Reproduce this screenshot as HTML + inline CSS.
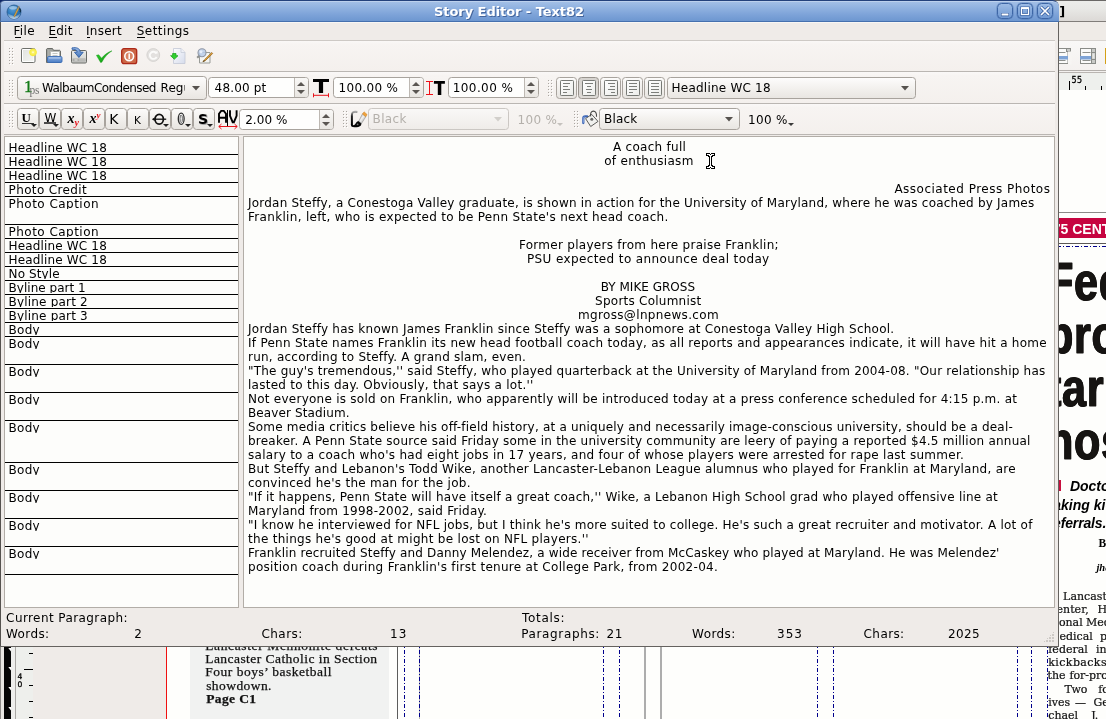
<!DOCTYPE html>
<html><head><meta charset="utf-8"><title>Story Editor - Text82</title>
<style>
*{box-sizing:border-box;margin:0;padding:0}
html,body{width:1106px;height:719px;overflow:hidden;background:#fff}
body{position:relative;font-family:"DejaVu Sans","Liberation Sans",sans-serif;font-size:12px;color:#000;line-height:14px}
.abs,.abs>*{position:absolute}
svg{display:block;overflow:visible}
#bg{will-change:transform;left:0;top:0;width:1106px;height:719px;overflow:hidden;background:#fefefc}
#win{will-change:transform;left:0;top:0;width:1059px;height:647px;overflow:hidden}
#winbg{left:0;top:20px;width:1059px;height:627px;background:#efebe8}
.t{position:absolute;white-space:nowrap;height:14px;line-height:14px}
#title{left:0;top:0;width:1059px;height:22px;background:linear-gradient(#a5c1e7 0,#93b4e1 30%,#7ca2d8 70%,#6d97d0 100%);border-top:1px solid #24427c;border-bottom:1px solid #4670ae;border-radius:4.500px 6.500px 0 0;overflow:hidden;box-shadow:inset 0 1px 0 rgba(255,255,255,.28),inset 1px 0 0 #4c6792}
#title .t{margin-top:0}
.wb{top:2px;width:16px;height:16px;border:1px solid #3d66a6;border-radius:4.500px;background:linear-gradient(#9cbbe5,#7099d3);box-shadow:0 0 0 .5px rgba(61,102,166,.5)}
.hl{height:1px;left:4px;width:1051px;background:#cdc9c5}
.hl.d{background:#bab6b2}
.tb{left:4px;width:1051px;background:linear-gradient(#faf8f7 0,#f7f4f2 12%,#f4f0ed 100%)}
.grip{width:1px;height:1px;background:#aaa6a1;box-shadow:0px 0px 0 #aaa6a1,1px 1px 0 #fff,3px 0px 0 #aaa6a1,4px 1px 0 #fff,0px 3px 0 #aaa6a1,1px 4px 0 #fff,3px 3px 0 #aaa6a1,4px 4px 0 #fff,0px 6px 0 #aaa6a1,1px 7px 0 #fff,3px 6px 0 #aaa6a1,4px 7px 0 #fff,0px 9px 0 #aaa6a1,1px 10px 0 #fff,3px 9px 0 #aaa6a1,4px 10px 0 #fff,0px 12px 0 #aaa6a1,1px 13px 0 #fff,3px 12px 0 #aaa6a1,4px 13px 0 #fff,0px 15px 0 #aaa6a1,1px 16px 0 #fff,3px 15px 0 #aaa6a1,4px 16px 0 #fff}
.combo,.spin,.btn{border:1px solid #a8a39d;border-radius:3.500px}
.combo{background:linear-gradient(#fdfcfc,#f3f1ee 50%,#e9e6e2)}
.combo.dis{border-color:#cbc7c3;background:linear-gradient(#f9f8f7,#efece9)}
.spin{background:#fefefd}
.spin i{right:0;top:0;bottom:0;width:14px;border-left:1px solid #bdb8b2;background:linear-gradient(#f9f8f6,#e9e6e2);border-radius:0 2.500px 2.500px 0}
.btn{background:linear-gradient(#fcfbfa,#f2f0ed 50%,#e8e5e1)}
.btn.on{background:linear-gradient(#d6d3cf,#dedbd7);border-color:#98938d}
.lab{height:14px;overflow:hidden}
.ln{left:0;width:233px;height:1px;background:#000}
.frame{border:1px solid #b2ada7;background:#fdfdfb}
.sgrip{width:12px;height:12px;background-image:radial-gradient(circle at 1px 1px,#cdc9c5 .8px,transparent 1.100px);background-size:3px 3px;-webkit-mask:linear-gradient(135deg,transparent 50%,#000 50%)}
.dv{width:1px;background:repeating-linear-gradient(to bottom,#00008c 0,#00008c 4px,transparent 4px,transparent 6px,#00008c 6px,#00008c 7px,transparent 7px,transparent 9px);background-position:0 1px}
.dh{height:1px;background:repeating-linear-gradient(to right,#00008c 0,#00008c 4px,transparent 4px,transparent 6px,#00008c 6px,#00008c 7px,transparent 7px,transparent 9px);background-position:-2px 0}
.hd{font:bold 54px/60px "Liberation Sans",sans-serif;height:60px;white-space:nowrap;color:#161412;transform-origin:0 0;transform:scaleX(.8);-webkit-text-stroke:1.100px #161412;text-shadow:.7px 0 0 #161412,-.7px 0 0 #161412;letter-spacing:.8px}
</style></head><body>
<div id="bg" class="abs">
<div class="abs" id="bgtop">
<div style="left:0;top:0;width:10px;height:10px;background:#0e2466"></div>
<div style="left:1050px;top:0;width:56px;height:22px;background:linear-gradient(#ecedea 0,#e8e8e5 40%,#dcd9d6 100%);border-top:1px solid #6a6866;border-bottom:1px solid #807c79"></div>
<span class="t" style="left:1059.30px;top:2.6px;height:17px;line-height:17px;font-family:'DejaVu Sans',sans-serif;font-size:13px;font-weight:bold;">]</span>
<div style="left:1050px;top:22px;width:56px;height:18px;background:#efebe7"></div>
<div style="left:1050px;top:40px;width:56px;height:1px;background:#d6d2ce"></div>
<div style="left:1050px;top:41px;width:56px;height:29px;background:linear-gradient(#f9f8f7,#f4f1ef)"></div>
<div style="left:1050px;top:70px;width:56px;height:1px;background:#b3afab"></div>
<div style="left:1050px;top:71px;width:56px;height:1px;background:#f3f1ef"></div>
<div style="left:1050px;top:72px;width:56px;height:1px;background:#b9b5b1"></div>
<div style="left:1050px;top:73px;width:56px;height:17px;background:#eef0ed"></div>
<div style="left:1069px;top:81px;width:1px;height:9px;background:#000"></div>
<div style="left:1085px;top:86px;width:1px;height:4px;background:#000"></div>
<div style="left:1101px;top:86px;width:1px;height:4px;background:#000"></div>
<span class="t" style="left:1071.60px;top:75.73px;letter-spacing:0.400px;height:10px;line-height:10px;-webkit-text-stroke:.3px #000;font-family:'DejaVu Sans',sans-serif;font-size:8px;">55</span>
<svg style="position:absolute;left:1055px;top:48px" width="16" height="16" viewBox="0 0 16 16" ><rect x=".5" y=".5" width="12.500" height="15" fill="#fbfbfa" stroke="#8a8c88"/><rect x="11.500" y=".5" width="4" height="3" fill="#c9cac7" stroke="#8a8c88"/><path d="M2.500 4.500h8M2.500 12.500h8" stroke="#8e908c"/><rect x="0" y="8" width="13" height="3.500" fill="#7ea3d6"/><rect x="13" y="3.500" width="3.500" height="13" fill="#f7f5f3"/></svg>
<svg style="position:absolute;left:1080px;top:48px" width="16" height="16" viewBox="0 0 16 16" ><rect x=".5" y=".5" width="12.500" height="15" fill="#fbfbfa" stroke="#8a8c88"/><rect x="11.500" y=".5" width="4" height="15" fill="#c9cac7" stroke="#8a8c88"/><path d="M11.500 4.500h4M11.500 11.500h4" stroke="#8a8c88"/><rect x="12.500" y="5.500" width="2" height="5" fill="#e6e6e4"/><path d="M2.500 4.500h8M2.500 12.500h8" stroke="#8e908c"/><rect x="0" y="8" width="11" height="3.500" fill="#7ea3d6"/></svg>
<div style="left:1105px;top:48px;width:1px;height:16px;background:#d4a017"></div>
</div>
<div class="abs" id="bgpage">
<div style="left:1059px;top:212px;width:47px;height:1px;background:#8b8987"></div>
<div style="left:1059px;top:218px;width:47px;height:20px;background:#c60440"></div>
<span class="t" style="left:1052.80px;top:219.65px;height:18px;line-height:18px;color:#fff;font-family:'Liberation Sans',sans-serif;font-size:14px;font-weight:bold;">75 CENTS</span>
<div style="left:1059px;top:243px;width:47px;height:1px;background:#5a5856"></div>
<div class="dh" style="left:1059px;top:246px;width:47px"></div>
<span class="hd" style="left:1047px;top:251.0px">Feds</span>
<span class="hd" style="left:1047px;top:304.0px">pro</span>
<span class="hd" style="left:1047px;top:357.0px">tar</span>
<span class="hd" style="left:1047px;top:410.0px">hos</span>
<div style="left:1059px;top:480px;width:2.300px;height:11px;background:#c8103f"></div>
<span class="t" style="left:1069.90px;top:476.65px;height:18px;line-height:18px;font-family:'Liberation Sans',sans-serif;font-size:14px;font-weight:bold;font-style:italic;">Doctors</span>
<span class="t" style="left:1048.60px;top:495.55px;height:18px;line-height:18px;font-family:'Liberation Sans',sans-serif;font-size:14px;font-weight:bold;font-style:italic;">taking kickbacks</span>
<span class="t" style="left:1047.80px;top:513.55px;letter-spacing:-0.156px;height:18px;line-height:18px;font-family:'Liberation Sans',sans-serif;font-size:14px;font-weight:bold;font-style:italic;">referrals.</span>
<span class="t" style="left:1098.50px;top:536.12px;height:15px;line-height:15px;font-family:'Liberation Serif',serif;font-size:11.5px;font-weight:bold;">BY</span>
<span class="t" style="left:1096.40px;top:561.46px;height:14px;line-height:14px;font-family:'Liberation Serif',serif;font-size:10.5px;font-weight:bold;font-style:italic;">jhawkes</span>
<span class="t" style="left:1063.10px;top:589.73px;height:14px;line-height:14px;color:#111;-webkit-text-stroke:.2px #111;font-family:'DejaVu Serif',serif;font-size:11px;">Lancaster</span>
<span class="t" style="left:1048.20px;top:603.0px;height:14px;line-height:14px;color:#111;-webkit-text-stroke:.2px #111;font-family:'DejaVu Serif',serif;font-size:11px;">Center,</span>
<span class="t" style="left:1097.60px;top:603.0px;height:14px;line-height:14px;color:#111;-webkit-text-stroke:.2px #111;font-family:'DejaVu Serif',serif;font-size:11px;">H</span>
<span class="t" style="left:1058.90px;top:616.27px;height:14px;line-height:14px;color:#111;-webkit-text-stroke:.2px #111;font-family:'DejaVu Serif',serif;font-size:11px;">onal</span>
<span class="t" style="left:1086.00px;top:616.27px;height:14px;line-height:14px;color:#111;-webkit-text-stroke:.2px #111;font-family:'DejaVu Serif',serif;font-size:11px;">Medical</span>
<span class="t" style="left:1048.20px;top:629.54px;height:14px;line-height:14px;color:#111;-webkit-text-stroke:.2px #111;font-family:'DejaVu Serif',serif;font-size:11px;">Medical</span>
<span class="t" style="left:1100.10px;top:629.54px;height:14px;line-height:14px;color:#111;-webkit-text-stroke:.2px #111;font-family:'DejaVu Serif',serif;font-size:11px;">p</span>
<span class="t" style="left:1048.30px;top:642.81px;height:14px;line-height:14px;color:#111;-webkit-text-stroke:.2px #111;font-family:'DejaVu Serif',serif;font-size:11px;">federal</span>
<span class="t" style="left:1096.10px;top:642.81px;height:14px;line-height:14px;color:#111;-webkit-text-stroke:.2px #111;font-family:'DejaVu Serif',serif;font-size:11px;">in</span>
<span class="t" style="left:1048.30px;top:656.08px;letter-spacing:0.400px;height:14px;line-height:14px;color:#111;-webkit-text-stroke:.2px #111;font-family:'DejaVu Serif',serif;font-size:11px;">kickbacks</span>
<span class="t" style="left:1047.50px;top:669.35px;height:14px;line-height:14px;color:#111;-webkit-text-stroke:.2px #111;font-family:'DejaVu Serif',serif;font-size:11px;">the</span>
<span class="t" style="left:1069.40px;top:669.35px;height:14px;line-height:14px;color:#111;-webkit-text-stroke:.2px #111;font-family:'DejaVu Serif',serif;font-size:11px;">for-profit</span>
<span class="t" style="left:1064.50px;top:682.62px;height:14px;line-height:14px;color:#111;-webkit-text-stroke:.2px #111;font-family:'DejaVu Serif',serif;font-size:11px;">Two</span>
<span class="t" style="left:1098.20px;top:682.62px;height:14px;line-height:14px;color:#111;-webkit-text-stroke:.2px #111;font-family:'DejaVu Serif',serif;font-size:11px;">fo</span>
<span class="t" style="left:1048.30px;top:695.89px;height:14px;line-height:14px;color:#111;-webkit-text-stroke:.2px #111;font-family:'DejaVu Serif',serif;font-size:11px;">ives</span>
<span class="t" style="left:1075.00px;top:695.89px;height:14px;line-height:14px;color:#111;-webkit-text-stroke:.2px #111;font-family:'DejaVu Serif',serif;font-size:11px;">—</span>
<span class="t" style="left:1093.40px;top:695.89px;height:14px;line-height:14px;color:#111;-webkit-text-stroke:.2px #111;font-family:'DejaVu Serif',serif;font-size:11px;">Ge</span>
<span class="t" style="left:1048.30px;top:709.16px;height:14px;line-height:14px;color:#111;-webkit-text-stroke:.2px #111;font-family:'DejaVu Serif',serif;font-size:11px;">chael</span>
<span class="t" style="left:1091.30px;top:709.16px;height:14px;line-height:14px;color:#111;-webkit-text-stroke:.2px #111;font-family:'DejaVu Serif',serif;font-size:11px;">J.</span>
</div>
<div class="abs" id="bgbot">
<div style="left:0;top:640px;width:4px;height:80px;background:#e9e7e3"></div><div style="left:0;top:640px;width:1px;height:80px;background:#8d8b88"></div>
<div style="left:4px;top:640px;width:7px;height:80px;background:#050505"></div>
<svg style="position:absolute;left:8px;top:648px" width="3" height="4" viewBox="0 0 3 4" ><path d="M.3 0h2.700v3.600z" fill="#fff"/></svg>
<svg style="position:absolute;left:8px;top:667px" width="3" height="4" viewBox="0 0 3 4" ><path d="M.3 0h2.700v3.600z" fill="#fff"/></svg>
<svg style="position:absolute;left:8px;top:687px" width="3" height="4" viewBox="0 0 3 4" ><path d="M.3 0h2.700v3.600z" fill="#fff"/></svg>
<svg style="position:absolute;left:8px;top:707px" width="3" height="4" viewBox="0 0 3 4" ><path d="M.3 0h2.700v3.600z" fill="#fff"/></svg>
<div style="left:11px;top:640px;width:4px;height:80px;background:#eeeeec"></div><div style="left:15px;top:640px;width:1px;height:80px;background:#a9a7a4"></div>
<div style="left:16px;top:640px;width:17px;height:80px;background:#eeefec"></div>
<div style="left:33px;top:640px;width:133px;height:80px;background:#efebe8"></div>
<div style="left:29px;top:653px;width:4px;height:1px;background:#000"></div>
<div style="left:29px;top:685px;width:4px;height:1px;background:#000"></div>
<div style="left:29px;top:701px;width:4px;height:1px;background:#000"></div>
<div style="left:29px;top:717px;width:4px;height:1px;background:#000"></div>
<div style="left:24px;top:669px;width:9px;height:1px;background:#000"></div>
<span class="t" style="left:17.40px;top:672.37px;height:10px;line-height:10px;-webkit-text-stroke:.3px #000;font-family:'DejaVu Sans',sans-serif;font-size:7.6px;">4</span>
<span class="t" style="left:17.40px;top:680.37px;height:10px;line-height:10px;-webkit-text-stroke:.3px #000;font-family:'DejaVu Sans',sans-serif;font-size:7.6px;">0</span>
<div style="left:166px;top:640px;width:1px;height:80px;background:#f01010"></div>
<div style="left:190px;top:640px;width:199px;height:80px;background:#f1f2f1"></div>
<span class="t" style="left:205.20px;top:637.44px;letter-spacing:0.631px;height:18px;line-height:18px;color:#111;-webkit-text-stroke:.25px #111;font-family:'Liberation Serif',serif;font-size:13.5px;">Lancaster Mennonite defeats</span>
<span class="t" style="left:205.20px;top:650.44px;letter-spacing:0.450px;height:18px;line-height:18px;color:#111;-webkit-text-stroke:.25px #111;font-family:'Liberation Serif',serif;font-size:13.5px;">Lancaster Catholic in Section</span>
<span class="t" style="left:205.20px;top:663.44px;letter-spacing:0.520px;height:18px;line-height:18px;color:#111;-webkit-text-stroke:.25px #111;font-family:'Liberation Serif',serif;font-size:13.5px;">Four boys’ basketball</span>
<span class="t" style="left:206.20px;top:676.74px;letter-spacing:0.425px;height:18px;line-height:18px;color:#111;-webkit-text-stroke:.25px #111;font-family:'Liberation Serif',serif;font-size:13.5px;">showdown.</span>
<span class="t" style="left:206.20px;top:689.84px;letter-spacing:0.367px;height:18px;line-height:18px;color:#111;-webkit-text-stroke:.25px #111;font-family:'Liberation Serif',serif;font-size:13.5px;font-weight:bold;">Page C1</span>
<div style="left:397px;top:640px;width:1px;height:80px;background:#5c5c5c"></div>
<div class="dv" style="left:404px;top:640px;height:80px"></div>
<div class="dv" style="left:419px;top:640px;height:80px"></div>
<div class="dv" style="left:603px;top:640px;height:80px"></div>
<div class="dv" style="left:619px;top:640px;height:80px"></div>
<div class="dv" style="left:817px;top:640px;height:80px"></div>
<div class="dv" style="left:833px;top:640px;height:80px"></div>
<div class="dv" style="left:1017px;top:640px;height:80px"></div>
<div class="dv" style="left:1031px;top:640px;height:80px"></div>
<div class="dv" style="left:1047px;top:640px;height:80px"></div>
<div style="left:419px;top:640px;width:1px;height:80px;background:#b5b5b5;z-index:-1"></div>
<div style="left:644px;top:640px;width:2px;height:80px;background:#adadad"></div><div style="left:660px;top:640px;width:2px;height:80px;background:#adadad"></div>
</div>
</div>
<div id="win" class="abs"><div id="winbg"></div>
<div id="title" class="abs">
<svg style="position:absolute;left:6px;top:3px" width="16" height="16" viewBox="0 0 16 16" ><defs><radialGradient id="gg" cx=".4" cy=".3" r=".8"><stop offset="0" stop-color="#5aa0d8"/><stop offset=".5" stop-color="#2a78bc"/><stop offset="1" stop-color="#1d5c9a"/></radialGradient><linearGradient id="gg2" x1="0" y1="0" x2="0" y2="1"><stop offset="0" stop-color="#fff" stop-opacity="0"/><stop offset="1" stop-color="#d8e8f6" stop-opacity=".85"/></linearGradient></defs>
<circle cx="8" cy="8" r="7" fill="url(#gg)" stroke="#2c5a8c" stroke-width=".8"/><path d="M1.500 9c2.500 1.500 5 3 7.500 3.200 2-.2 4-1.800 5.500-3.500-.5 3.800-3 6-6.500 6.200C4.500 14.800 2 12.500 1.500 9z" fill="url(#gg2)"/><ellipse cx="7" cy="3.800" rx="4" ry="1.800" fill="#cfe4f6" opacity=".55"/>
<path d="M12.500 2.200l1.200.8-4.500 9.200-1.200.9.100-1.600z" fill="#e6a83e" stroke="#8a6a2a" stroke-width=".4"/><path d="M12.500 2.200l1.200.8-.9 1.800-1.200-.7z" fill="#8a8480"/><path d="M13.500 4.500c1 .8 1.300 2.300.8 3.800" stroke="#12324e" stroke-width="1.400" fill="none"/></svg>
<span class="t" style="left:434.00px;top:4px;letter-spacing:-0.060px;color:#fff;text-shadow:1px 1px 0 #44659c;font-weight:bold;font-size:13px;">Story Editor - Text82</span>
<div class="wb" style="left:997px"><svg style="position:absolute;left:0px;top:0px" width="14" height="14" viewBox="0 0 14 14" ><path d="M3 10.600h8" stroke="#3c63a2" stroke-width="3.400"/><path d="M3.600 10.600h6.800" stroke="#fff" stroke-width="2"/></svg></div>
<div class="wb" style="left:1017px"><svg style="position:absolute;left:0px;top:0px" width="14" height="14" viewBox="0 0 14 14" ><rect x="3.500" y="3.800" width="7" height="6.700" fill="none" stroke="#3c63a2" stroke-width="2.600"/><rect x="3.500" y="3.800" width="7" height="6.700" fill="none" stroke="#fff" stroke-width="1.200"/><path d="M3.500 4.200h7" stroke="#fff" stroke-width="1.800"/></svg></div>
<div class="wb" style="left:1037px"><svg style="position:absolute;left:0px;top:0px" width="14" height="14" viewBox="0 0 14 14" ><path d="M2.800 2.800l8.400 8.400M11.200 2.800l-8.400 8.400" stroke="#3c63a2" stroke-width="3.200"/><path d="M3 3l8 8M11 3l-8 8" stroke="#fff" stroke-width="1.700"/></svg></div>
</div>
<div id="menu" class="abs">
<span class="t" style="left:13.50px;top:24px;letter-spacing:0.333px;">File</span>
<span class="t" style="left:48.40px;top:24px;letter-spacing:0.267px;">Edit</span>
<span class="t" style="left:86.10px;top:24px;letter-spacing:0.240px;">Insert</span>
<span class="t" style="left:136.80px;top:24px;letter-spacing:0.429px;">Settings</span>
<div style="left:14.5px;top:37px;width:6.3px;height:1px;background:#000"></div>
<div style="left:49.2px;top:37px;width:7.6px;height:1px;background:#000"></div>
<div style="left:87.3px;top:37px;width:3px;height:1px;background:#000"></div>
<div style="left:137.4px;top:37px;width:7.4px;height:1px;background:#000"></div>
</div>
<div class="abs">
<div class="hl" style="top:40px"></div><div class="tb" style="top:41px;height:30px"></div>
<div class="hl d" style="top:71px"></div><div class="tb" style="top:72px;height:31px"></div>
<div class="hl d" style="top:103px"></div><div class="tb" style="top:104px;height:30px"></div>
<div class="hl d" style="top:134px"></div>
<div class="grip" style="left:9px;top:48px"></div>
<div class="grip" style="left:9px;top:80px"></div>
<div class="grip" style="left:548px;top:80px"></div>
<div class="grip" style="left:9px;top:111px"></div>
<div class="grip" style="left:343px;top:111px"></div>
<div class="grip" style="left:574px;top:111px"></div>
</div>
<div class="abs" id="tb1"><svg style="position:absolute;left:21px;top:48px" width="16" height="16" viewBox="0 0 16 16" ><defs><linearGradient id="gn" x1="0" y1="0" x2="1" y2="1"><stop offset="0" stop-color="#e2e4e0"/><stop offset="1" stop-color="#f4f5f2"/></linearGradient><radialGradient id="gy"><stop offset="0" stop-color="#fffef0"/><stop offset=".3" stop-color="#fbf36a"/><stop offset=".75" stop-color="#f6ea3e"/><stop offset="1" stop-color="#f6ea3e" stop-opacity="0"/></radialGradient></defs>
<rect x=".5" y=".5" width="13.500" height="14" rx="1.3" fill="#fff" stroke="#6e706c"/><rect x="2" y="2" width="10.500" height="11" fill="url(#gn)"/><circle cx="12" cy="4.3" r="4.4" fill="url(#gy)"/></svg><svg style="position:absolute;left:46px;top:48px" width="17" height="16" viewBox="0 0 17 16" ><defs><linearGradient id="go" x1="0" y1="0" x2="0" y2="1"><stop offset="0" stop-color="#8db0e2"/><stop offset="1" stop-color="#4a7cc4"/></linearGradient></defs>
<path d="M.5 14.5V1.2l.7-.7h5.3l1 1.8h6.2l.8.8v11.400z" fill="#a0a29e" stroke="#6a6c68"/><path d="M2 3h1.5M2 5h1.5M2 7h1.5" stroke="#b8bab6"/>
<path d="M4.5 3.5h9v8h-9z" fill="#fbfbfa" stroke="#b9bbb7"/><path d="M6.5 5.5h5M6.500 7.500h5" stroke="#c5c7c3"/>
<rect x="1.500" y="8.500" width="14.500" height="6" rx="1.200" fill="url(#go)" stroke="#3a6cb6" stroke-width=".9"/><path d="M3 10h11.500" stroke="#c2d6f3" opacity=".85"/></svg><svg style="position:absolute;left:71px;top:47px" width="17" height="17" viewBox="0 0 17 17" ><defs><linearGradient id="gs" x1="0" y1="0" x2="0" y2="1"><stop offset="0" stop-color="#ecedea"/><stop offset="1" stop-color="#cccdca"/></linearGradient><linearGradient id="gsa" x1="0" y1="0" x2="0" y2="1"><stop offset="0" stop-color="#9dbbe4"/><stop offset="1" stop-color="#3f72bb"/></linearGradient></defs>
<rect x=".5" y="3.500" width="15" height="12.500" rx="1.200" fill="url(#gs)" stroke="#666864"/><rect x="1.500" y="11.5" width="13" height="3" fill="#a9aaa7"/><path d="M3.500 13h3M8.500 13h1M10.500 13h1M12.500 13h1" stroke="#e8e8e6"/>
<path d="M1 .9c4.500-.8 8 .3 8.300 4.300h2.900L7.900 10.500 3.500 5.200h2.700C6 2.900 4 2 1 2.300z" fill="url(#gsa)" stroke="#2c5ca6" stroke-width=".9"/></svg><svg style="position:absolute;left:96px;top:49px" width="17" height="16" viewBox="0 0 17 16" ><defs><linearGradient id="gc" x1="0" y1="0" x2="1" y2="1"><stop offset="0" stop-color="#35d835"/><stop offset="1" stop-color="#0a8a0a"/></linearGradient></defs>
<path d="M.4 6.300l2.300-.5 2.900 3.400C8.300 6 11.600 3.200 16 1.800c-4.300 2.900-7.400 6.200-10.200 11.400L4.600 13.500z" fill="url(#gc)" stroke="#0b8f0b" stroke-width=".4"/></svg><svg style="position:absolute;left:121px;top:48px" width="17" height="17" viewBox="0 0 17 17" ><rect x=".7" y=".7" width="15" height="15" rx="2.200" fill="#cc6746" stroke="#ad2818" stroke-width="1.300"/><circle cx="8.200" cy="8.200" r="4.400" fill="#d98464" stroke="#fff" stroke-width="1.600"/><path d="M8.200 5.400v5.600" stroke="#fff" stroke-width="1.500"/></svg><svg style="position:absolute;left:146px;top:48px" width="15" height="15" viewBox="0 0 15 15" ><circle cx="7.300" cy="7" r="6.400" fill="#e3e1df" stroke="#d6d4d1" stroke-width="1"/><path d="M10.300 5.200A3.600 3.600 0 1 0 10.600 9" fill="none" stroke="#fbfbfa" stroke-width="1.800"/><path d="M8.400 5.800l3.300-.3-.3-3z" fill="#fbfbfa"/></svg><svg style="position:absolute;left:170px;top:48px" width="17" height="17" viewBox="0 0 17 17" ><defs><linearGradient id="gi" x1="0" y1="0" x2="1" y2="1"><stop offset="0" stop-color="#fdfdfe"/><stop offset="1" stop-color="#d6dcec"/></linearGradient></defs>
<path d="M3.500.5h7.500l4 4v11h-11.500z" fill="url(#gi)" stroke="#c3c8d6" stroke-width=".8"/><path d="M11 .5v4h4" fill="#eef0f6" stroke="#c3c8d6" stroke-width=".7"/>
<path d="M2.600 5.500h3.400v2.200h2L4.300 11.300.6 7.700h2z" fill="#2fd02f" stroke="#12a012" stroke-width=".7"/></svg><svg style="position:absolute;left:196px;top:48px" width="17" height="16" viewBox="0 0 17 16" ><path d="M3.500 4.500h10.500v10.500H3.500z" fill="#f4f5f3" stroke="#9a9c98"/><path d="M1.200 9.800l3-3" stroke="#8e908c" stroke-width="2"/>
<circle cx="6" cy="4.800" r="4" fill="#b9cdea" fill-opacity=".85" stroke="#8e96a4" stroke-width="1.100"/><circle cx="5" cy="3.800" r="1.500" fill="#e6eefb"/>
<path d="M15.800 4.500l-7.300 7.200-1.600 2 2.400-1 7.400-7.200z" fill="#e9a63c" stroke="#8a5a12" stroke-width=".7"/><path d="M6.900 13.700l1.100-1.500.9.700z" fill="#222"/></svg></div>
<div class="abs" id="tb2">
<div class="combo" style="left:17px;top:76px;width:190px;height:24px"></div>
<span style="position:absolute;left:24px;top:78px;font:17px/18px 'Liberation Serif',serif;color:#127a16;-webkit-text-stroke:.35px #127a16;height:18px">1</span><span style="position:absolute;left:29.5px;top:83px;font:11.5px/14px 'Liberation Serif',serif;color:#747474;height:14px;letter-spacing:-.2px">ps</span>
<span class="t" style="left:42.00px;top:81px;letter-spacing:-0.587px;">WalbaumCondensed</span>
<span class="t" style="left:160.60px;top:81px;width:24.7px;overflow:hidden;">Regular</span>
<svg style="position:absolute;left:192px;top:86px" width="8" height="5" viewBox="0 0 8 5" ><path d="M0 0h8l-4.0 4.5z" fill="#56524e"/></svg>
<div class="spin abs" style="left:208px;top:77px;width:101px;height:21px"><i></i><svg style="position:absolute;left:88px;top:4px" width="8" height="4" viewBox="0 0 8 4" ><path d="M0 4h8L4 0z" fill="#5a5652"/></svg><svg style="position:absolute;left:88px;top:12px" width="8" height="4" viewBox="0 0 8 4" ><path d="M0 0h8L4 4z" fill="#5a5652"/></svg></div>
<span class="t" style="left:214.60px;top:81px;letter-spacing:0.171px;">48.00 pt</span>
<svg style="position:absolute;left:313px;top:79px" width="17" height="19" viewBox="0 0 17 19" ><path d="M0 0h16v2.900H10.100V14.100H5.900V2.900H0z" fill="#000"/><path d="M.5 14.300v4M15.500 14.300v4M.5 16.300h15" stroke="#e8141c" stroke-width="1" fill="none"/></svg>
<div class="spin abs" style="left:333px;top:77px;width:91px;height:21px"><i></i><svg style="position:absolute;left:78px;top:4px" width="8" height="4" viewBox="0 0 8 4" ><path d="M0 4h8L4 0z" fill="#5a5652"/></svg><svg style="position:absolute;left:78px;top:12px" width="8" height="4" viewBox="0 0 8 4" ><path d="M0 0h8L4 4z" fill="#5a5652"/></svg></div>
<span class="t" style="left:338.50px;top:81px;letter-spacing:0.314px;">100.00 %</span>
<svg style="position:absolute;left:426px;top:80px" width="19" height="16" viewBox="0 0 19 16" ><path d="M0 1.500h7M0 14.500h7M3.500 1.500v13" stroke="#f01018" stroke-width="1" fill="none"/><path d="M7.900 1h11v2.700H15.300V15H11.800V3.700H7.900z" fill="#000"/></svg>
<div class="spin abs" style="left:448px;top:77px;width:91px;height:21px"><i></i><svg style="position:absolute;left:78px;top:4px" width="8" height="4" viewBox="0 0 8 4" ><path d="M0 4h8L4 0z" fill="#5a5652"/></svg><svg style="position:absolute;left:78px;top:12px" width="8" height="4" viewBox="0 0 8 4" ><path d="M0 0h8L4 4z" fill="#5a5652"/></svg></div>
<span class="t" style="left:452.80px;top:81px;letter-spacing:0.400px;">100.00 %</span>
<div class="btn" style="left:556px;top:77px;width:21px;height:22px"></div><svg style="position:absolute;left:560px;top:80px" width="14" height="16" viewBox="0 0 14 16" ><defs><linearGradient id="gal" x1="0" y1="0" x2="1" y2="1"><stop offset="0" stop-color="#fff"/><stop offset="1" stop-color="#ecedea"/></linearGradient></defs><rect x=".5" y=".5" width="13" height="15" rx=".8" fill="url(#gal)" stroke="#777975"/><path d="M3 3.5H10M3 6.5H8M3 9.5H10M3 12.5H7" stroke="#7c7e7a"/></svg>
<div class="btn on" style="left:578px;top:77px;width:21px;height:22px"></div><svg style="position:absolute;left:582px;top:80px" width="14" height="16" viewBox="0 0 14 16" ><defs><linearGradient id="gac" x1="0" y1="0" x2="1" y2="1"><stop offset="0" stop-color="#fff"/><stop offset="1" stop-color="#ecedea"/></linearGradient></defs><rect x=".5" y=".5" width="13" height="15" rx=".8" fill="url(#gac)" stroke="#777975"/><path d="M3 3.5H11M5 6.5H9M4 9.5H10M5 12.5H9" stroke="#7c7e7a"/></svg>
<div class="btn" style="left:600px;top:77px;width:21px;height:22px"></div><svg style="position:absolute;left:604px;top:80px" width="14" height="16" viewBox="0 0 14 16" ><defs><linearGradient id="gar" x1="0" y1="0" x2="1" y2="1"><stop offset="0" stop-color="#fff"/><stop offset="1" stop-color="#ecedea"/></linearGradient></defs><rect x=".5" y=".5" width="13" height="15" rx=".8" fill="url(#gar)" stroke="#777975"/><path d="M4 3.5H11M6 6.5H11M4 9.5H11M7 12.5H11" stroke="#7c7e7a"/></svg>
<div class="btn" style="left:622px;top:77px;width:21px;height:22px"></div><svg style="position:absolute;left:626px;top:80px" width="14" height="16" viewBox="0 0 14 16" ><defs><linearGradient id="gaj" x1="0" y1="0" x2="1" y2="1"><stop offset="0" stop-color="#fff"/><stop offset="1" stop-color="#ecedea"/></linearGradient></defs><rect x=".5" y=".5" width="13" height="15" rx=".8" fill="url(#gaj)" stroke="#777975"/><path d="M3 3.5H11M3 6.5H11M3 9.5H11M3 12.5H7" stroke="#7c7e7a"/></svg>
<div class="btn" style="left:644px;top:77px;width:21px;height:22px"></div><svg style="position:absolute;left:648px;top:80px" width="14" height="16" viewBox="0 0 14 16" ><defs><linearGradient id="gaf" x1="0" y1="0" x2="1" y2="1"><stop offset="0" stop-color="#fff"/><stop offset="1" stop-color="#ecedea"/></linearGradient></defs><rect x=".5" y=".5" width="13" height="15" rx=".8" fill="url(#gaf)" stroke="#777975"/><path d="M3 3.5H11M3 6.5H11M3 9.5H11M3 12.5H11" stroke="#7c7e7a"/></svg>
<div class="combo" style="left:667px;top:77px;width:249px;height:22px"></div>
<span class="t" style="left:671.60px;top:81px;letter-spacing:0.215px;">Headline WC 18</span>
<svg style="position:absolute;left:901px;top:86px" width="8" height="5" viewBox="0 0 8 5" ><path d="M0 0h8l-4.0 4.5z" fill="#56524e"/></svg>
</div>
<div class="abs" id="tb3">
<div class="btn" style="left:17px;top:108px;width:22px;height:22px"></div><span style="position:absolute;left:21.5px;top:110px;font:bold 13px/16px 'Liberation Serif',serif;height:16px">U</span><svg style="position:absolute;left:22px;top:123px" width="13" height="2" viewBox="0 0 13 2" ><path d="M0 .5h12" stroke="#333"/></svg><svg style="position:absolute;left:31px;top:124px" width="6" height="3" viewBox="0 0 6 3" ><path d="M0 0h6l-3 3z" fill="#222"/></svg>
<div class="btn" style="left:39px;top:108px;width:22px;height:22px"></div><span style="position:absolute;left:44.5px;top:110px;font:12px/16px 'DejaVu Sans',sans-serif;height:16px">W</span><svg style="position:absolute;left:44px;top:122px" width="13" height="2" viewBox="0 0 13 2" ><path d="M0 1h12" stroke="#222" stroke-width="1.600"/></svg><svg style="position:absolute;left:53px;top:124px" width="6" height="3" viewBox="0 0 6 3" ><path d="M0 0h6l-3 3z" fill="#222"/></svg>
<div class="btn" style="left:61px;top:108px;width:22px;height:22px"></div><span style="position:absolute;left:67.5px;top:111px;font:italic bold 14px/16px 'Liberation Serif',serif;height:16px">x</span><span style="position:absolute;left:74.5px;top:117px;font:italic bold 10px/12px 'Liberation Serif',serif;height:12px;color:#e8141c">y</span>
<div class="btn" style="left:83px;top:108px;width:22px;height:22px"></div><span style="position:absolute;left:89.5px;top:111px;font:italic bold 14px/16px 'Liberation Serif',serif;height:16px">x</span><span style="position:absolute;left:96.5px;top:109px;font:italic bold 9px/12px 'Liberation Serif',serif;height:12px;color:#e8141c">y</span>
<div class="btn" style="left:105px;top:108px;width:22px;height:22px"></div><span style="position:absolute;left:109.3px;top:111px;font:14px/16px 'DejaVu Sans',sans-serif;height:16px">K</span>
<div class="btn" style="left:127px;top:108px;width:22px;height:22px"></div><span style="position:absolute;left:134px;top:112px;font:10.500px/16px 'DejaVu Sans',sans-serif;height:16px">K</span>
<div class="btn" style="left:149px;top:108px;width:22px;height:22px"></div><svg style="position:absolute;left:152px;top:112px" width="18" height="14" viewBox="0 0 18 14" ><ellipse cx="7.200" cy="7.200" rx="4.200" ry="4.900" fill="none" stroke="#111" stroke-width="1.800"/><path d="M.8 7.200h13.400" stroke="#111" stroke-width="1.300"/><path d="M0 7.200l2.500-1.800v3.600z" fill="#111"/></svg><svg style="position:absolute;left:163px;top:124px" width="6" height="3" viewBox="0 0 6 3" ><path d="M0 0h6l-3 3z" fill="#222"/></svg>
<div class="btn" style="left:171px;top:108px;width:22px;height:22px"></div><svg style="position:absolute;left:177px;top:112px" width="10" height="14" viewBox="0 0 10 14" ><ellipse cx="4.200" cy="6.800" rx="2.900" ry="5.600" fill="#fff" stroke="#2e2e2e" stroke-width="1.300"/><ellipse cx="4.200" cy="6.800" rx="1.200" ry="3.900" fill="#fafafa" stroke="#555" stroke-width=".9"/></svg><svg style="position:absolute;left:185px;top:124px" width="6" height="3" viewBox="0 0 6 3" ><path d="M0 0h6l-3 3z" fill="#222"/></svg>
<div class="btn" style="left:193px;top:108px;width:22px;height:22px"></div><span style="position:absolute;left:199px;top:111.5px;font:bold 14px/16px 'DejaVu Sans',sans-serif;height:16px;color:#a8a8a8">S</span><span style="position:absolute;left:198px;top:110.5px;font:bold 14px/16px 'DejaVu Sans',sans-serif;height:16px">S</span><svg style="position:absolute;left:207px;top:124px" width="6" height="3" viewBox="0 0 6 3" ><path d="M0 0h6l-3 3z" fill="#222"/></svg>
<svg style="position:absolute;left:218px;top:110px" width="20" height="19" viewBox="0 0 20 19" ><path d="M1 12.700V3.800L3.200 .9h2.600L8 3.800v8.900M1 7.800h7" fill="none" stroke="#000" stroke-width="1.900"/><path d="M9.500 0v16" stroke="#000" stroke-width="1"/><path d="M12 .2v5.600l2.700 6.400h1.200l2.700-6.400V.2" fill="none" stroke="#000" stroke-width="1.900"/><path d="M.8 16.500h18.400M3.500 14L.8 16.500 3.500 19M16.500 14l2.700 2.500L16.500 19" fill="none" stroke="#e8141c" stroke-width="1"/></svg>
<div class="spin abs" style="left:239px;top:109px;width:95px;height:21px"><i></i><svg style="position:absolute;left:82px;top:4px" width="8" height="4" viewBox="0 0 8 4" ><path d="M0 4h8L4 0z" fill="#5a5652"/></svg><svg style="position:absolute;left:82px;top:12px" width="8" height="4" viewBox="0 0 8 4" ><path d="M0 0h8L4 4z" fill="#5a5652"/></svg></div>
<span class="t" style="left:245.20px;top:113px;letter-spacing:0.040px;">2.00 %</span>
<svg style="position:absolute;left:350px;top:110px" width="18" height="18" viewBox="0 0 18 18" ><defs><linearGradient id="gbs" x1="0" y1="0" x2="0" y2="1"><stop offset="0" stop-color="#aaa"/><stop offset=".35" stop-color="#222"/><stop offset="1" stop-color="#000"/></linearGradient><linearGradient id="gbf" x1="0" y1="0" x2="1" y2="1"><stop offset="0" stop-color="#8a8a8a"/><stop offset=".45" stop-color="#f2f2f2"/><stop offset="1" stop-color="#8a8a8a"/></linearGradient></defs>
<path d="M7.400 1.900C3 1.300 1.900 2.400 1.900 5.200V15" fill="none" stroke="url(#gbs)" stroke-width="2"/>
<path d="M.9 14.500c0 2.300 1.200 2.700 3.500 2.700 3 0 5.400-.4 6.500-1.800 1-1.500.6-3.400-1-4.300-1.800-.6-3.400.4-4.200 2.200-.5 1.300-1.300 2-2.800 1.800z" fill="#050505"/><circle cx="7.600" cy="14.300" r=".9" fill="#777"/>
<path d="M8.700 11.300l2.700 2.300 4.400-6.800-3.400-2.900z" fill="url(#gbf)" stroke="#666" stroke-width=".4"/>
<path d="M12.400 3.900l3.400 2.900 1.300-2.300-3-2.700z" fill="#f0a23c" stroke="#c27a1c" stroke-width=".4"/></svg>
<div class="combo dis" style="left:368px;top:108px;width:141px;height:22px"></div>
<span class="t" style="left:372.60px;top:112px;letter-spacing:0.350px;color:#b4b0ab;">Black</span>
<svg style="position:absolute;left:494px;top:117px" width="8" height="5" viewBox="0 0 8 5" ><path d="M0 0h8l-4.0 4.5z" fill="#d2cfcb"/></svg>
<span class="t" style="left:517.60px;top:113px;letter-spacing:0.300px;color:#b4b0ab;">100 %</span>
<svg style="position:absolute;left:557px;top:123px" width="6" height="3" viewBox="0 0 6 3" ><path d="M0 0h6l-3 3z" fill="#c5c2be"/></svg>
<svg style="position:absolute;left:581px;top:110px" width="18" height="18" viewBox="0 0 18 18" ><path d="M2.300 13V8.300c0-1.300.8-1.900 2.100-1.900h1.800" fill="none" stroke="#3d66b6" stroke-width="2.300" stroke-linecap="round"/><path d="M2.300 12.800V8.400c0-.9.600-1.300 1.500-1.300" fill="none" stroke="#9cb8ea" stroke-width=".8"/>
<path d="M4.600 8.600l6.100-4.200 6.300 7-7.300 5.100z" fill="#f1f1ef" stroke="#4c4c4a" stroke-width=".9"/><path d="M9.700 6.300C9 3.200 10.400 1.100 12.400 1.100s3.400 1.700 3.100 5.700" fill="none" stroke="#484846" stroke-width="1.100"/><circle cx="10.800" cy="9.300" r="1.500" fill="#6a6a68"/></svg>
<div class="combo" style="left:599px;top:108px;width:141px;height:22px"></div>
<span class="t" style="left:604.00px;top:112px;letter-spacing:0.200px;">Black</span>
<svg style="position:absolute;left:725px;top:117px" width="8" height="5" viewBox="0 0 8 5" ><path d="M0 0h8l-4.0 4.5z" fill="#56524e"/></svg>
<span class="t" style="left:748.10px;top:113px;letter-spacing:0.300px;">100 %</span>
<svg style="position:absolute;left:788px;top:123px" width="6" height="3" viewBox="0 0 6 3" ><path d="M0 0h6l-3 3z" fill="#3a3a3a"/></svg>
</div>
<div class="abs" id="left"><div class="frame abs" style="left:4px;top:136px;width:235px;height:472px;overflow:hidden">
<div class="lab" style="left:-5px;top:2px;width:239px"><span class="t" style="left:8.60px;top:2px;letter-spacing:0.154px;">Headline WC 18</span></div><div class="ln" style="top:17px"></div>
<div class="lab" style="left:-5px;top:16px;width:239px"><span class="t" style="left:8.60px;top:2px;letter-spacing:0.154px;">Headline WC 18</span></div><div class="ln" style="top:31px"></div>
<div class="lab" style="left:-5px;top:30px;width:239px"><span class="t" style="left:8.60px;top:2px;letter-spacing:0.154px;">Headline WC 18</span></div><div class="ln" style="top:45px"></div>
<div class="lab" style="left:-5px;top:44px;width:239px"><span class="t" style="left:8.60px;top:2px;letter-spacing:0.364px;">Photo Credit</span></div><div class="ln" style="top:59px"></div>
<div class="lab" style="left:-5px;top:58px;width:239px"><span class="t" style="left:8.60px;top:2px;letter-spacing:0.467px;">Photo Caption</span></div><div class="ln" style="top:87px"></div>
<div class="lab" style="left:-5px;top:86px;width:239px"><span class="t" style="left:8.60px;top:2px;letter-spacing:0.467px;">Photo Caption</span></div><div class="ln" style="top:101px"></div>
<div class="lab" style="left:-5px;top:100px;width:239px"><span class="t" style="left:8.60px;top:2px;letter-spacing:0.154px;">Headline WC 18</span></div><div class="ln" style="top:115px"></div>
<div class="lab" style="left:-5px;top:114px;width:239px"><span class="t" style="left:8.60px;top:2px;letter-spacing:0.154px;">Headline WC 18</span></div><div class="ln" style="top:129px"></div>
<div class="lab" style="left:-5px;top:128px;width:239px"><span class="t" style="left:8.60px;top:2px;letter-spacing:0.114px;">No Style</span></div><div class="ln" style="top:143px"></div>
<div class="lab" style="left:-5px;top:142px;width:239px"><span class="t" style="left:8.60px;top:2px;letter-spacing:0.017px;">Byline part 1</span></div><div class="ln" style="top:157px"></div>
<div class="lab" style="left:-5px;top:156px;width:239px"><span class="t" style="left:8.60px;top:2px;letter-spacing:0.183px;">Byline part 2</span></div><div class="ln" style="top:171px"></div>
<div class="lab" style="left:-5px;top:170px;width:239px"><span class="t" style="left:8.60px;top:2px;letter-spacing:0.183px;">Byline part 3</span></div><div class="ln" style="top:185px"></div>
<div class="lab" style="left:-5px;top:184px;width:239px"><span class="t" style="left:8.60px;top:2px;letter-spacing:0.267px;">Body</span></div><div class="ln" style="top:199px"></div>
<div class="lab" style="left:-5px;top:198px;width:239px"><span class="t" style="left:8.60px;top:2px;letter-spacing:0.267px;">Body</span></div><div class="ln" style="top:227px"></div>
<div class="lab" style="left:-5px;top:226px;width:239px"><span class="t" style="left:8.60px;top:2px;letter-spacing:0.267px;">Body</span></div><div class="ln" style="top:255px"></div>
<div class="lab" style="left:-5px;top:254px;width:239px"><span class="t" style="left:8.60px;top:2px;letter-spacing:0.267px;">Body</span></div><div class="ln" style="top:283px"></div>
<div class="lab" style="left:-5px;top:282px;width:239px"><span class="t" style="left:8.60px;top:2px;letter-spacing:0.267px;">Body</span></div><div class="ln" style="top:325px"></div>
<div class="lab" style="left:-5px;top:324px;width:239px"><span class="t" style="left:8.60px;top:2px;letter-spacing:0.267px;">Body</span></div><div class="ln" style="top:353px"></div>
<div class="lab" style="left:-5px;top:352px;width:239px"><span class="t" style="left:8.60px;top:2px;letter-spacing:0.267px;">Body</span></div><div class="ln" style="top:381px"></div>
<div class="lab" style="left:-5px;top:380px;width:239px"><span class="t" style="left:8.60px;top:2px;letter-spacing:0.267px;">Body</span></div><div class="ln" style="top:409px"></div>
<div class="lab" style="left:-5px;top:408px;width:239px"><span class="t" style="left:8.60px;top:2px;letter-spacing:0.267px;">Body</span></div><div class="ln" style="top:437px"></div>
</div></div>
<div class="abs" id="right"><div class="frame abs" style="left:243px;top:136px;width:812px;height:472px;overflow:hidden"><div class="abs" style="left:-244px;top:-137px;width:10px;height:10px">
<span class="t" style="left:613.00px;top:140px;letter-spacing:0.273px;">A coach full</span>
<span class="t" style="left:604.20px;top:154px;letter-spacing:0.333px;">of enthusiasm</span>
<span class="t" style="left:894.40px;top:182px;letter-spacing:0.491px;">Associated Press Photos</span>
<span class="t" style="left:248.00px;top:196px;letter-spacing:0.218px;">Jordan Steffy, a Conestoga Valley graduate, is shown in action for the University of Maryland, where he was coached by James</span>
<span class="t" style="left:248.00px;top:210px;letter-spacing:0.312px;">Franklin, left, who is expected to be Penn State's next head coach.</span>
<span class="t" style="left:519.00px;top:238px;letter-spacing:0.275px;">Former players from here praise Franklin;</span>
<span class="t" style="left:527.00px;top:252px;letter-spacing:0.382px;">PSU expected to announce deal today</span>
<span class="t" style="left:600.70px;top:280px;letter-spacing:0.017px;">BY MIKE GROSS</span>
<span class="t" style="left:595.10px;top:294px;letter-spacing:0.240px;">Sports Columnist</span>
<span class="t" style="left:578.00px;top:308px;letter-spacing:0.341px;">mgross@lnpnews.com</span>
<span class="t" style="left:248.00px;top:322px;letter-spacing:0.248px;">Jordan Steffy has known James Franklin since Steffy was a sophomore at Conestoga Valley High School.</span>
<span class="t" style="left:248.00px;top:336px;letter-spacing:0.268px;">If Penn State names Franklin its new head football coach today, as all reports and appearances indicate, it will have hit a home</span>
<span class="t" style="left:248.00px;top:350px;letter-spacing:0.232px;">run, according to Steffy. A grand slam, even.</span>
<span class="t" style="left:248.00px;top:364px;letter-spacing:0.222px;">"The guy's tremendous,'' said Steffy, who played quarterback at the University of Maryland from 2004-08. "Our relationship has</span>
<span class="t" style="left:248.00px;top:378px;letter-spacing:0.263px;">lasted to this day. Obviously, that says a lot.''</span>
<span class="t" style="left:248.00px;top:392px;letter-spacing:0.250px;">Not everyone is sold on Franklin, who apparently will be introduced today at a press conference scheduled for 4:15 p.m. at</span>
<span class="t" style="left:248.00px;top:406px;letter-spacing:0.114px;">Beaver Stadium.</span>
<span class="t" style="left:248.00px;top:420px;letter-spacing:0.198px;">Some media critics believe his off-field history, at a uniquely and necessarily image-conscious university, should be a deal-</span>
<span class="t" style="left:248.00px;top:434px;letter-spacing:0.234px;">breaker. A Penn State source said Friday some in the university community are leery of paying a reported $4.5 million annual</span>
<span class="t" style="left:248.00px;top:448px;letter-spacing:0.284px;">salary to a coach who's had eight jobs in 17 years, and four of whose players were arrested for rape last summer.</span>
<span class="t" style="left:248.00px;top:462px;letter-spacing:0.269px;">But Steffy and Lebanon's Todd Wike, another Lancaster-Lebanon League alumnus who played for Franklin at Maryland, are</span>
<span class="t" style="left:248.00px;top:476px;letter-spacing:0.271px;">convinced he's the man for the job.</span>
<span class="t" style="left:248.00px;top:490px;letter-spacing:0.235px;">"If it happens, Penn State will have itself a great coach,'' Wike, a Lebanon High School grad who played offensive line at</span>
<span class="t" style="left:248.00px;top:504px;letter-spacing:0.217px;">Maryland from 1998-2002, said Friday.</span>
<span class="t" style="left:248.00px;top:518px;letter-spacing:0.238px;">"I know he interviewed for NFL jobs, but I think he's more suited to college. He's such a great recruiter and motivator. A lot of</span>
<span class="t" style="left:248.00px;top:532px;letter-spacing:0.289px;">the things he's good at might be lost on NFL players.''</span>
<span class="t" style="left:248.00px;top:546px;letter-spacing:0.158px;">Franklin recruited Steffy and Danny Melendez, a wide receiver from McCaskey who played at Maryland. He was Melendez'</span>
<span class="t" style="left:248.00px;top:560px;letter-spacing:0.293px;">position coach during Franklin's first tenure at College Park, from 2002-04.</span>
<svg style="position:absolute;left:706px;top:153px" width="9" height="16" viewBox="0 0 9 16" shape-rendering="crispEdges"><rect x="0" y="0" width="4" height="1" fill="#000"/><rect x="5" y="0" width="4" height="1" fill="#000"/><rect x="0" y="1" width="1" height="1" fill="#000"/><rect x="1" y="1" width="3" height="1" fill="#fff"/><rect x="4" y="1" width="1" height="1" fill="#000"/><rect x="5" y="1" width="3" height="1" fill="#fff"/><rect x="8" y="1" width="1" height="1" fill="#000"/><rect x="0" y="2" width="3" height="1" fill="#000"/><rect x="3" y="2" width="3" height="1" fill="#fff"/><rect x="6" y="2" width="3" height="1" fill="#000"/><rect x="2" y="3" width="2" height="1" fill="#000"/><rect x="4" y="3" width="1" height="1" fill="#fff"/><rect x="5" y="3" width="2" height="1" fill="#000"/><rect x="3" y="4" width="1" height="1" fill="#000"/><rect x="4" y="4" width="1" height="1" fill="#fff"/><rect x="5" y="4" width="1" height="1" fill="#000"/><rect x="3" y="5" width="1" height="1" fill="#000"/><rect x="4" y="5" width="1" height="1" fill="#fff"/><rect x="5" y="5" width="1" height="1" fill="#000"/><rect x="3" y="6" width="1" height="1" fill="#000"/><rect x="4" y="6" width="1" height="1" fill="#fff"/><rect x="5" y="6" width="1" height="1" fill="#000"/><rect x="3" y="7" width="1" height="1" fill="#000"/><rect x="4" y="7" width="1" height="1" fill="#fff"/><rect x="5" y="7" width="1" height="1" fill="#000"/><rect x="3" y="8" width="1" height="1" fill="#000"/><rect x="4" y="8" width="1" height="1" fill="#fff"/><rect x="5" y="8" width="1" height="1" fill="#000"/><rect x="3" y="9" width="1" height="1" fill="#000"/><rect x="4" y="9" width="1" height="1" fill="#fff"/><rect x="5" y="9" width="1" height="1" fill="#000"/><rect x="3" y="10" width="1" height="1" fill="#000"/><rect x="4" y="10" width="1" height="1" fill="#fff"/><rect x="5" y="10" width="1" height="1" fill="#000"/><rect x="3" y="11" width="1" height="1" fill="#000"/><rect x="4" y="11" width="1" height="1" fill="#fff"/><rect x="5" y="11" width="1" height="1" fill="#000"/><rect x="2" y="12" width="2" height="1" fill="#000"/><rect x="4" y="12" width="1" height="1" fill="#fff"/><rect x="5" y="12" width="2" height="1" fill="#000"/><rect x="0" y="13" width="3" height="1" fill="#000"/><rect x="3" y="13" width="3" height="1" fill="#fff"/><rect x="6" y="13" width="3" height="1" fill="#000"/><rect x="0" y="14" width="1" height="1" fill="#000"/><rect x="1" y="14" width="3" height="1" fill="#fff"/><rect x="4" y="14" width="1" height="1" fill="#000"/><rect x="5" y="14" width="3" height="1" fill="#fff"/><rect x="8" y="14" width="1" height="1" fill="#000"/><rect x="0" y="15" width="4" height="1" fill="#000"/><rect x="5" y="15" width="4" height="1" fill="#000"/></svg>
</div></div></div>
<div class="abs" id="status">
<span class="t" style="left:6.10px;top:611px;letter-spacing:0.412px;">Current Paragraph:</span>
<span class="t" style="left:6.10px;top:627px;letter-spacing:0.360px;">Words:</span>
<span class="t" style="left:134.30px;top:627px;">2</span>
<span class="t" style="left:261.40px;top:627px;letter-spacing:0.480px;">Chars:</span>
<span class="t" style="left:390.00px;top:627px;letter-spacing:1.200px;">13</span>
<span class="t" style="left:522.00px;top:611px;letter-spacing:0.700px;">Totals:</span>
<span class="t" style="left:521.20px;top:627px;letter-spacing:0.640px;">Paragraphs:</span>
<span class="t" style="left:606.40px;top:627px;letter-spacing:0.600px;">21</span>
<span class="t" style="left:692.10px;top:627px;letter-spacing:0.400px;">Words:</span>
<span class="t" style="left:777.00px;top:627px;letter-spacing:1.000px;">353</span>
<span class="t" style="left:863.60px;top:627px;letter-spacing:0.400px;">Chars:</span>
<span class="t" style="left:948.00px;top:627px;letter-spacing:0.333px;">2025</span>
<div class="sgrip" style="left:1043px;top:631px"></div>
</div>
<div class="abs"><div style="left:1px;top:22px;width:1057px;height:1px;background:#f8f6f4"></div><div style="left:0;top:22px;width:1px;height:625px;background:#55524f"></div><div style="left:1058px;top:22px;width:1px;height:625px;background:#65625f"></div><div style="left:0;top:646px;width:1059px;height:1px;background:#65625f"></div></div>
</div>
</body></html>
